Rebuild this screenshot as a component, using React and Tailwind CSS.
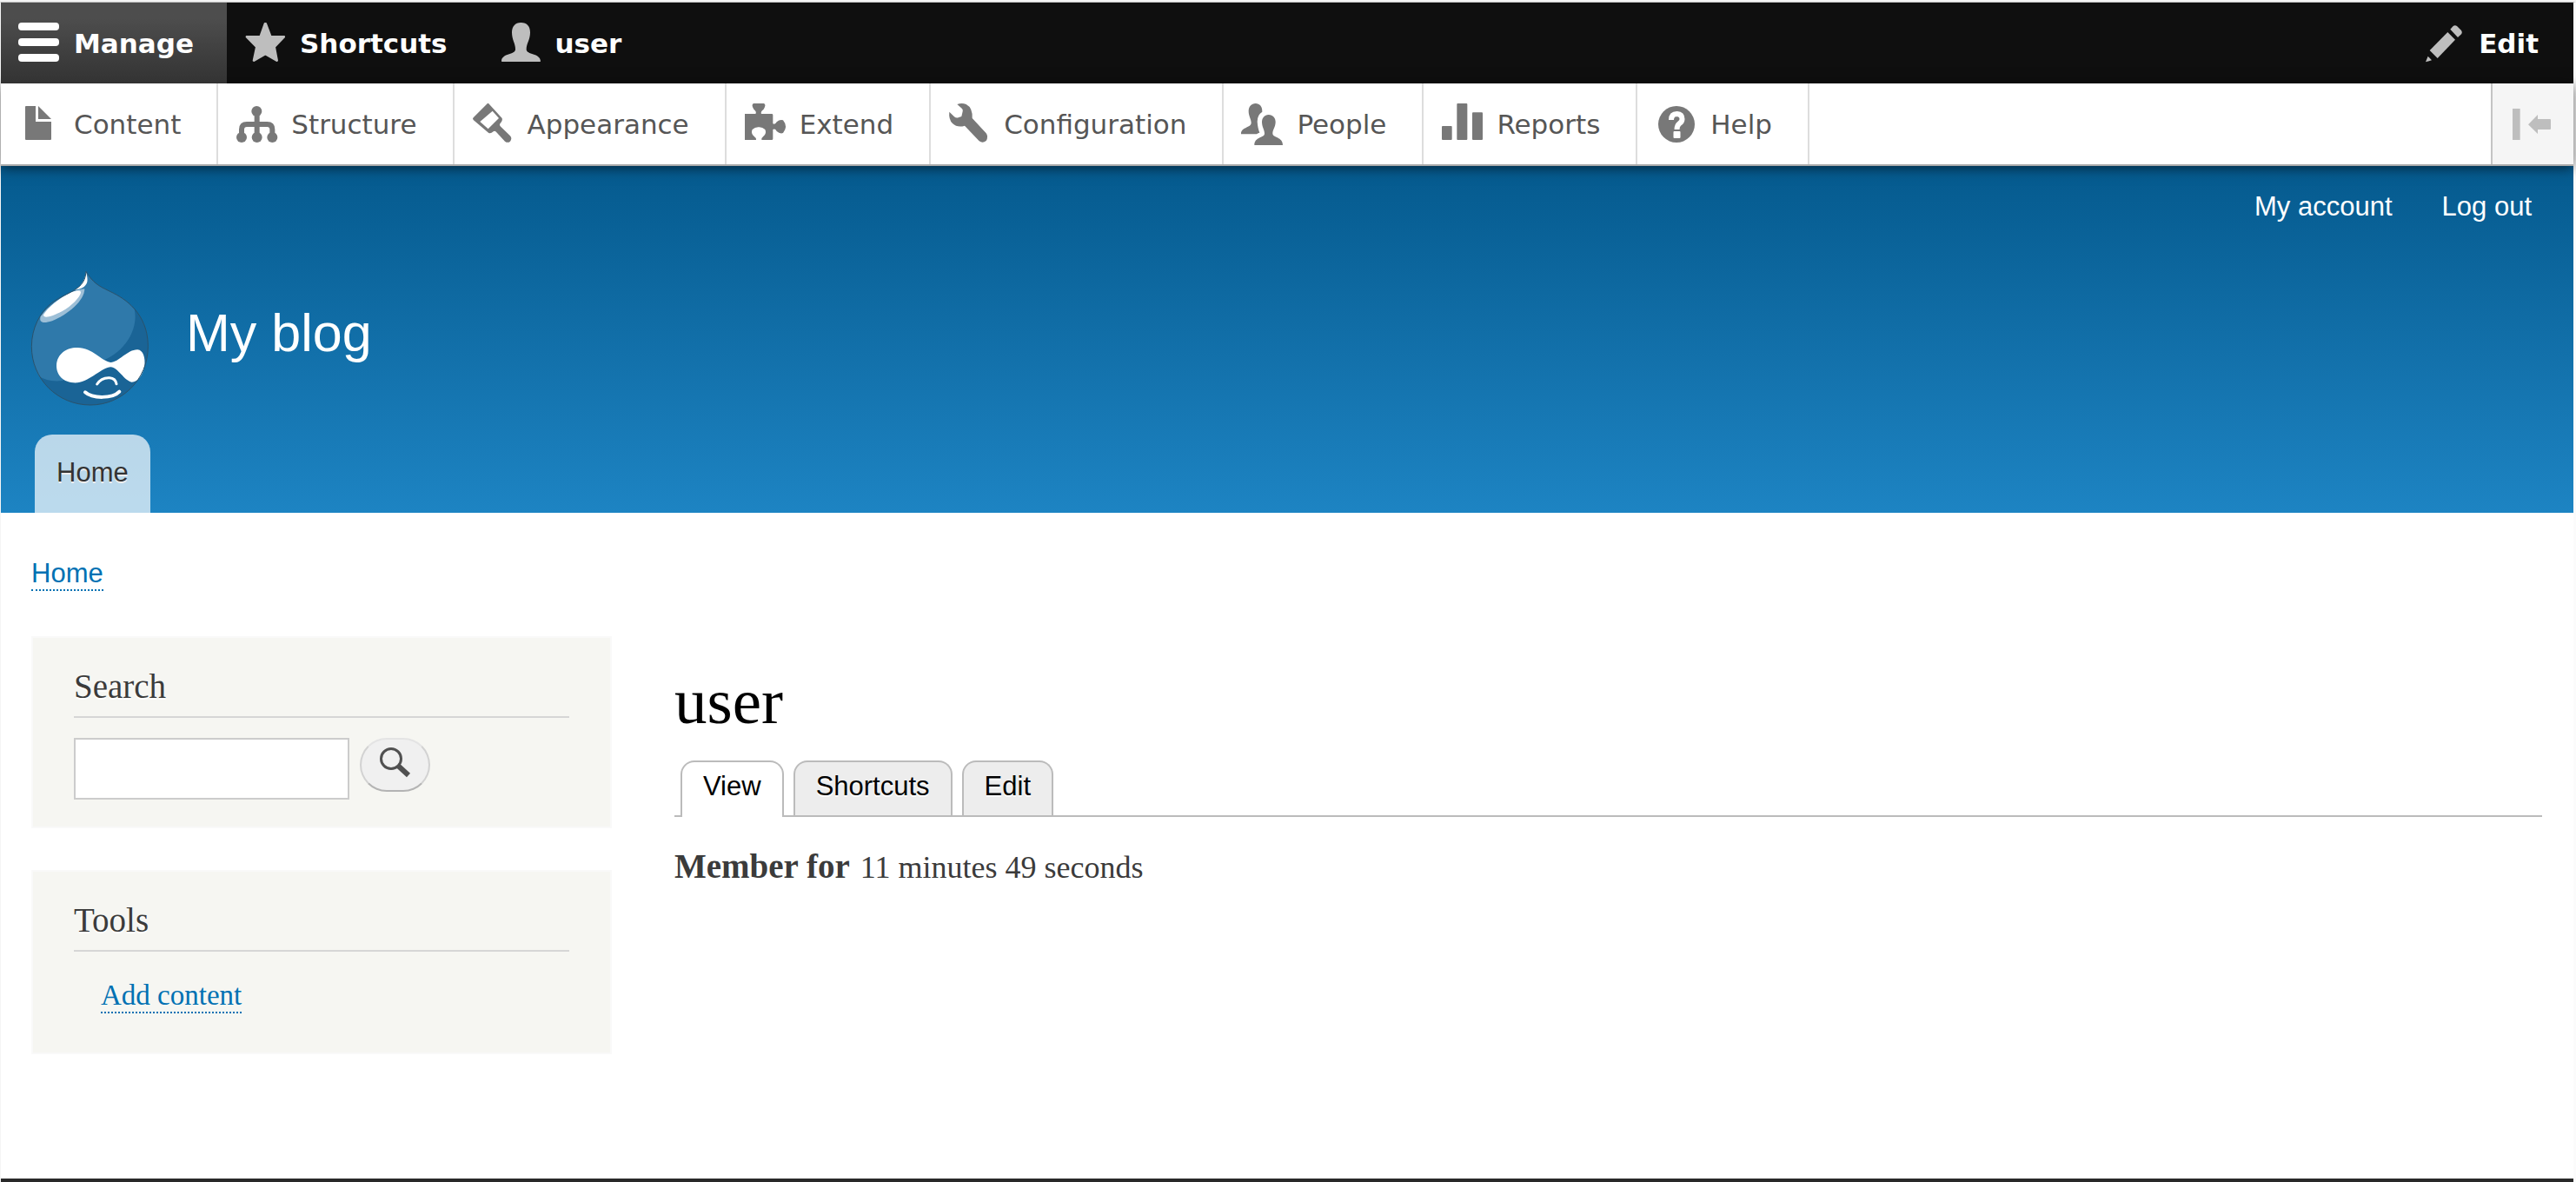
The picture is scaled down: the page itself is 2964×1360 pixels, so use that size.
import React from "react";

const DROP_TOP = "M297 66 C305 80 320 103 350 120 C380 136 405 145 435 168";
const DROP_LEFT =
  "C109 260 140 206 175 178 C200 158 225 148 245 137 C270 123 295 108 297 66Z";

function Icon({ viewBox = "0 0 48 47", children }) {
  return (
    <svg
      className="h-[47px] w-12 shrink-0 overflow-visible"
      viewBox={viewBox}
      fill="currentColor"
      aria-hidden="true"
    >
      {children}
    </svg>
  );
}

const icons = {
  menu: (
    <Icon>
      <rect x="0" y="0" width="47" height="9" rx="4" />
      <rect x="0" y="18" width="47" height="9" rx="4" />
      <rect x="0" y="36" width="47" height="9" rx="4" />
    </Icon>
  ),
  star: (
    <Icon viewBox="33 48 144 141">
      <path
        stroke="currentColor"
        strokeWidth="6"
        strokeLinejoin="round"
        d="M104 51 H108 L125 96 H171 V98 L138 132 L147 179 L145 180 L106 157 L67 180 L65 179 L75 132 L41 98 V96 H88Z"
      />
    </Icon>
  ),
  person: (
    <Icon viewBox="915 48 144 141">
      <path d="M988 48 C1010 48 1020 62 1020 82 C1020 108 1007 120 1007 140 C1007 160 1055 152 1056 181 Q1056 183 1054 183 H923 Q921 183 921 181 C922 152 969 160 969 140 C969 120 957 108 957 82 C957 62 968 48 988 48Z" />
    </Icon>
  ),
  pencil: (
    <Icon viewBox="681 78 144 141">
      <path d="M775 101 L785 90 Q791 86 798 90 L813 105 Q818 112 814 117 L801 129Z" />
      <path d="M766 111 L792 137 L731 201 L704 174Z" />
      <path d="M698 194 L711 208 L690 214Z" />
    </Icon>
  ),
  content: (
    <Icon>
      <path d="M9 3 H20 V21 H38 V41 Q38 42 37 42 H9 Q8 42 8 41 V4 Q8 3 9 3Z" />
      <path d="M23 3 L38 18 H23Z" />
    </Icon>
  ),
  structure: (
    <Icon viewBox="3 327 144 141">
      <circle cx="76" cy="354" r="18" />
      <circle cx="24" cy="444" r="18" />
      <circle cx="77" cy="444" r="18" />
      <circle cx="130" cy="444" r="18" />
      <path
        d="M77 354 V444 M24 444 V417 Q24 399 42 399 H112 Q130 399 130 417 V444"
        fill="none"
        stroke="currentColor"
        strokeWidth="18"
      />
    </Icon>
  ),
  appearance: (
    <Icon viewBox="825 327 144 141">
      <path
        fillRule="evenodd"
        d="M878 328 Q880 325 883 328 L929 378 Q932 386 922 397 Q919 402 923 406 L957 439 Q965 448 957 458 Q949 465 939 458 L910 427 Q905 419 899 424 Q889 433 882 428 L830 384 Q826 380 830 376Z M896 353 L853 390 L881 415 L918 378Z"
      />
    </Icon>
  ),
  extend: (
    <Icon viewBox="45 57 144 141">
      <path d="M48 93 H85 Q90 86 79 77 Q69 62 78 57 H114 Q123 62 113 77 Q101 86 105 93 H141 Q145 93 145 97 V127 Q153 131 158 121 Q169 111 180 115 Q198 137 180 159 Q169 163 158 153 Q153 143 145 147 V179 Q145 183 141 183 H106 Q104 177 111 172 Q125 161 118 147 Q108 138 96 139 Q84 138 74 147 Q67 161 81 172 Q89 177 87 183 H48Z" />
    </Icon>
  ),
  configuration: (
    <Icon viewBox="753 57 144 141">
      <path d="M784 60 Q800 54 815 60 Q838 72 836 108 L884 160 Q893 172 884 186 Q872 196 860 187 L810 134 Q785 142 768 126 Q754 112 757 86 L774 103 Q780 108 788 106 L799 102 L803 85 Q805 77 800 74Z" />
    </Icon>
  ),
  people: (
    <Icon viewBox="84 57 144 141">
      <path d="M179 96 C194 96 203 107 203 121 C203 138 193 149 193 161 C193 175 229 172 228 201 H130 C129 172 166 175 165 161 C165 149 156 138 156 121 C156 107 165 96 179 96Z" />
      <path d="M134 57 C148 57 158 68 157 86 Q140 96 140 120 Q142 145 148 158 Q143 159 138 163 H84 C83 138 119 142 119 124 C119 112 110 100 110 84 C110 68 120 57 134 57Z" />
    </Icon>
  ),
  reports: (
    <Icon viewBox="774 57 144 141">
      <rect x="777" y="135" width="35" height="48" rx="3" />
      <rect x="829" y="57" width="36" height="126" rx="3" />
      <rect x="882" y="88" width="36" height="95" rx="3" />
    </Icon>
  ),
  help: (
    <Icon>
      <circle cx="25" cy="24" r="21" />
      <path
        d="M19 19 Q19 12 25.5 12 Q31.500 12.500 31.500 18 Q31.500 21 28.500 23 Q25.500 25 25.500 30"
        fill="none"
        stroke="white"
        strokeWidth="6"
      />
      <rect x="21.500" y="32" width="8" height="8" rx="1" fill="white" />
    </Icon>
  ),
  collapse: (
    <Icon viewBox="993 357 144 141">
      <rect x="993" y="375" width="26" height="108" rx="1" />
      <path d="M1047 430 L1080 396 V411 H1122 Q1125 411 1125 414 V444 Q1125 447 1122 447 H1080 V462Z" />
    </Icon>
  ),
};

function Druplicon() {
  return (
    <svg className="h-[156px] w-[137px] shrink-0" viewBox="105 62 411 468" aria-hidden="true">
      <path
        fill="#1a6496"
        d={`${DROP_TOP} C485 207 511 260 511 325 C511 440 420 527 312 527 C198 527 109 437 109 325 ${DROP_LEFT}`}
      />
      <path
        fill="#2f79aa"
        d={`${DROP_TOP} Q452 181 464 196 C480 270 425 345 360 371 L300 400 L215 443 C180 447 155 440 135 428 C118 398 109 360 109 325 ${DROP_LEFT}`}
      />
      <path
        fill="#9dbfd7"
        d="M140 222 C134 243 148 247 180 237 C235 214 292 167 292 126 L275 128 C215 150 165 185 140 222Z"
      />
      <path
        fill="white"
        d="M150 216 C150 230 178 222 215 203 C250 183 275 155 279 139 C280 128 262 130 243 139 C205 157 165 190 150 216Z"
      />
      <path
        fill="white"
        d="M297 66 C305 98 303 108 290 119 C280 127 268 127 256 131 C275 120 293 103 297 66Z"
      />
      <path
        fill="white"
        d="M195 390 C197 350 230 328 268 329 C320 330 350 375 382 380 C410 380 440 335 475 336 C495 338 502 365 499 392 C493 425 475 448 455 448 C430 445 405 395 382 396 C355 396 310 445 268 450 C220 453 194 425 195 390Z"
      />
      <path
        fill="none"
        stroke="white"
        strokeWidth="9"
        strokeLinecap="round"
        d="M335 455 C345 439 360 432 378 433 C392 434 400 442 402 454"
      />
      <path
        fill="none"
        stroke="white"
        strokeWidth="12"
        strokeLinecap="round"
        d="M294 483 C318 505 388 506 412 481"
      />
      <path
        fill="none"
        stroke="#2b526b"
        strokeWidth="3"
        d={`${DROP_TOP} C485 207 511 260 511 325 C511 440 420 527 312 527 C198 527 109 437 109 325 ${DROP_LEFT}`}
      />
    </svg>
  );
}

function BarTab({ icon, label, active }) {
  return (
    <button
      type="button"
      className={
        active
          ? "flex items-center gap-4 bg-linear-to-b from-[#4d4d4d] from-20% to-[#333] pr-[38px] pl-5 font-bold text-white"
          : "flex items-center gap-4 pr-10 pl-5 font-bold text-white"
      }
    >
      <span className={active ? "text-white" : "text-[#bebebe]"}>{icons[icon]}</span>
      {label}
    </button>
  );
}

const tray = [
  ["content", "Content"],
  ["structure", "Structure"],
  ["appearance", "Appearance"],
  ["extend", "Extend"],
  ["configuration", "Configuration"],
  ["people", "People"],
  ["reports", "Reports"],
  ["help", "Help"],
];

function Toolbar() {
  return (
    <div className="relative z-10 font-['DejaVu_Sans',Verdana,sans-serif] text-[31px] leading-9">
      <div className="flex h-[93px] bg-[#0f0f0f]">
        <BarTab icon="menu" label="Manage" active />
        <BarTab icon="star" label="Shortcuts" />
        <BarTab icon="person" label="user" />
        <div className="ml-auto flex">
          <BarTab icon="pencil" label="Edit" />
        </div>
      </div>
      <nav
        aria-label="Administration"
        className="flex h-[95px] border-b-2 border-[#aaa] bg-white shadow-[0_2px_14px_rgba(0,0,0,0.6)]"
      >
        {tray.map(([icon, label]) => (
          <a
            key={icon}
            href="#"
            className="flex items-center gap-4 border-r-2 border-[#ddd] pr-[41px] pl-5 text-[#565656]"
          >
            <span className="text-[#787878]">{icons[icon]}</span>
            {label}
          </a>
        ))}
        <button
          type="button"
          aria-label="Vertical orientation"
          className="ml-auto flex w-[95px] items-center justify-center border-l-2 border-[#c4c4c4] bg-[#f5f5f5] text-[#bebebe]"
        >
          {icons.collapse}
        </button>
      </nav>
    </div>
  );
}

function Header() {
  return (
    <header className="bg-linear-to-b from-[#055a8e] to-[#1d84c3] pl-[34px] text-[31px] leading-9 text-white">
      <nav aria-label="Account" className="flex justify-end gap-[57px] pt-[29px] pr-12">
        <a href="#">My account</a>
        <a href="#">Log out</a>
      </nav>
      <a href="#" className="mt-[55px] flex w-fit items-center gap-[42px]">
        <Druplicon />
        <span className="pb-3 text-[61px] leading-[72px]">My blog</span>
      </a>
      <nav aria-label="Main" className="mt-[33px] flex pl-[5px]">
        <a
          href="#"
          className="rounded-t-[20px] bg-white/70 px-[25px] pt-[26px] pb-7 text-[#333] [text-shadow:0_2px_#eee]"
        >
          Home
        </a>
      </nav>
    </header>
  );
}

function Block({ title, className, children }) {
  return (
    <section className={`border-2 border-[#f9f9f9] bg-[#f6f6f2] px-[47px] pt-[34px] ${className}`}>
      <h2 className="border-b-2 border-[#d6d6d6] pb-3 text-[39px] leading-[44px] text-[#3b3b3b] [text-shadow:0_2px_white]">
        {title}
      </h2>
      {children}
    </section>
  );
}

function Sidebar() {
  return (
    <aside className="flex flex-col gap-12">
      <Block title="Search" className="pb-[31px]">
        <form className="mt-[23px] flex items-start gap-3" onSubmit={(e) => e.preventDefault()}>
          <input
            type="search"
            aria-label="Search"
            className="h-[71px] w-[317px] border-2 border-[#ccc] bg-white px-3 text-[31px]"
          />
          <button
            type="submit"
            aria-label="Search"
            className="flex h-[62px] w-[81px] items-center justify-center rounded-full border-2 border-x-[#d2d2d2] border-t-[#e4e4e4] border-b-[#b4b4b4] bg-[#f0f0f0] pb-1"
          >
            <svg className="size-9" viewBox="0 0 36 36" aria-hidden="true">
              <circle cx="13" cy="13" r="11.500" fill="none" stroke="#505050" strokeWidth="3" />
              <path d="M21 21 L33 32" stroke="#505050" strokeWidth="6" />
            </svg>
          </button>
        </form>
      </Block>
      <Block title="Tools" className="pb-[45px]">
        <ul className="mt-[31px] flex pl-[31px]">
          <li>
            <a
              href="#"
              className="block border-b-2 border-dotted border-[#0071b3] text-[33px] leading-[38px] text-[#0071b3]"
            >
              Add content
            </a>
          </li>
        </ul>
      </Block>
    </aside>
  );
}

function Profile() {
  const tab =
    "rounded-t-[16px] border-2 border-b-0 border-[#bbb] px-6 pt-[10px] [text-shadow:0_2px_white]";
  return (
    <main className="pt-[33px]">
      <h1 className="text-[75px] leading-[84px] text-black">user</h1>
      <nav
        aria-label="Tabs"
        className="mt-[26px] flex gap-[11px] border-b-2 border-[#bbb] pl-[7px] font-['Liberation_Sans',Arial,sans-serif] text-[31px] leading-9 text-black"
      >
        <a href="#" aria-current="page" className={`${tab} -mb-[2px] bg-white pb-[17px]`}>
          View
        </a>
        <a href="#" className={`${tab} bg-[#ededed] pb-[15px]`}>
          Shortcuts
        </a>
        <a href="#" className={`${tab} bg-[#ededed] pb-[15px]`}>
          Edit
        </a>
      </nav>
      <p className="mt-9 flex items-baseline gap-3 text-[36px] leading-[42px] text-[#3b3b3b]">
        <b className="text-[39px]">Member for</b>
        <span>11 minutes 49 seconds</span>
      </p>
    </main>
  );
}

export default function App() {
  return (
    <div className="border-t-2 border-[#f4f4f4] bg-[#f9f9f9]">
      <div className="flex min-h-[calc(100vh-2px)] flex-col border-t border-r-[3px] border-l border-t-[#bbb] border-r-[#fbfbfb] border-l-[#f5f5f5] bg-white font-['Liberation_Sans',Arial,sans-serif]">
        <Toolbar />
        <Header />
        <div className="grow pr-9 pb-12 pl-[35px]">
          <nav aria-label="Breadcrumb" className="flex pt-[52px]">
            <a
              href="#"
              className="border-b-2 border-dotted border-[#0071b3] text-[31px] leading-9 text-[#0071b3]"
            >
              Home
            </a>
          </nav>
          <div className="mt-[52px] grid grid-cols-[668fr_2149fr] gap-[72px] font-[Georgia,'Liberation_Serif',serif]">
            <Sidebar />
            <Profile />
          </div>
        </div>
        <footer className="h-1 bg-[#292929]" />
      </div>
    </div>
  );
}
